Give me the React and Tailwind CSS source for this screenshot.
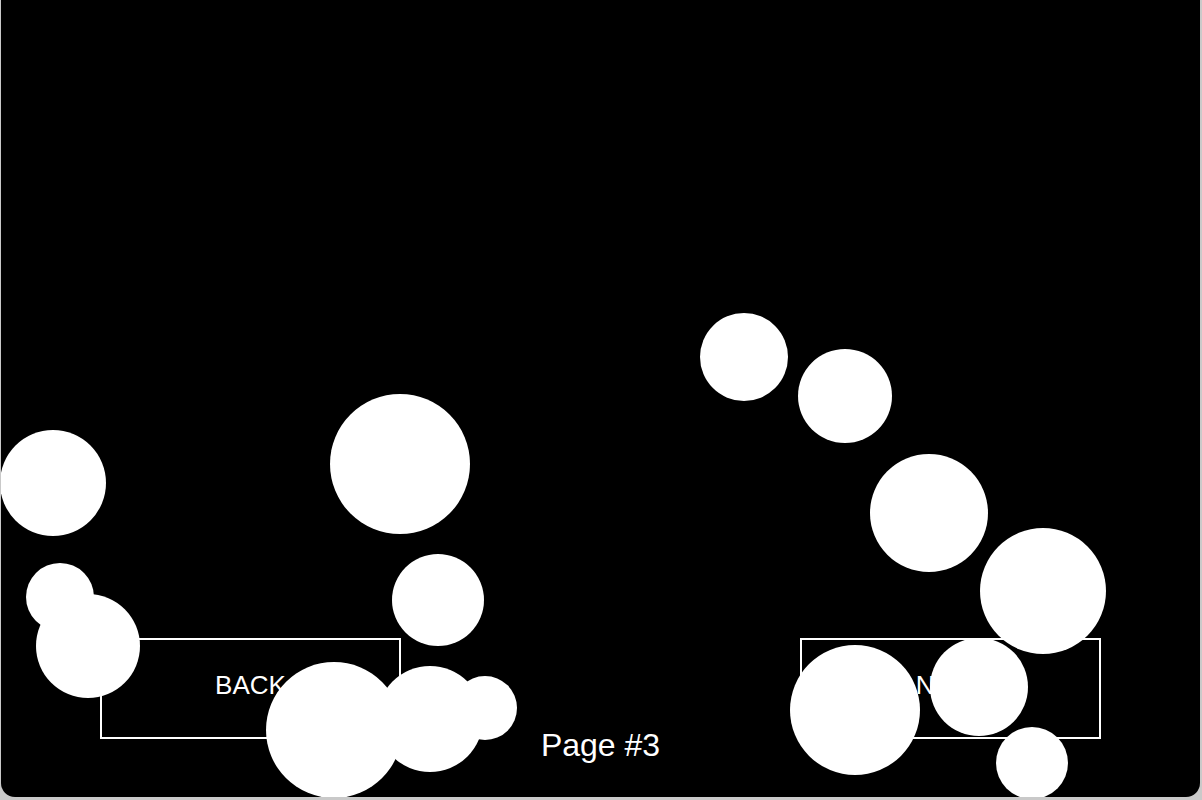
import React from "react";

const balls = [
  { x: 744, y: 357, r: 44 },
  { x: 845, y: 396, r: 47 },
  { x: 929, y: 513, r: 59 },
  { x: 1043, y: 591, r: 63 },
  { x: 979, y: 687, r: 49 },
  { x: 1032, y: 763, r: 36 },
  { x: 855, y: 710, r: 65 },
  { x: 400, y: 464, r: 70 },
  { x: 438, y: 600, r: 46 },
  { x: 53, y: 483, r: 53 },
  { x: 60, y: 597, r: 34 },
  { x: 88, y: 646, r: 52 },
  { x: 334, y: 730, r: 68 },
  { x: 430, y: 719, r: 53 },
  { x: 485, y: 708, r: 32 },
];

function NavButton({ label }) {
  return (
    <button className="w-[301px] h-[101px] border-2 border-white bg-black text-white text-[26px] pb-[6px] flex items-center justify-center">
      {label}
    </button>
  );
}

export default function App() {
  return (
    <div className="w-[1202px] h-[800px] bg-[#c9c9c9] overflow-hidden" style={{ fontFamily: '"Comic Sans MS", "Liberation Sans", sans-serif' }}>
      <div className="relative ml-px w-[1199px] h-[797px] bg-black rounded-b-[14px] overflow-hidden flex flex-col justify-end">
        <div className="flex items-end justify-between px-[99px] pb-[58px]">
          <NavButton label="BACK" />
          <div className="flex-1 text-center text-white text-[32px] leading-[42px] translate-y-[27px]">
            Page #3
          </div>
          <NavButton label="NEXT" />
        </div>
        {balls.map((b, i) => (
          <div
            key={i}
            className="absolute rounded-full bg-white"
            style={{ left: b.x - b.r - 1, top: b.y - b.r, width: b.r * 2, height: b.r * 2 }}
          />
        ))}
      </div>
    </div>
  );
}
